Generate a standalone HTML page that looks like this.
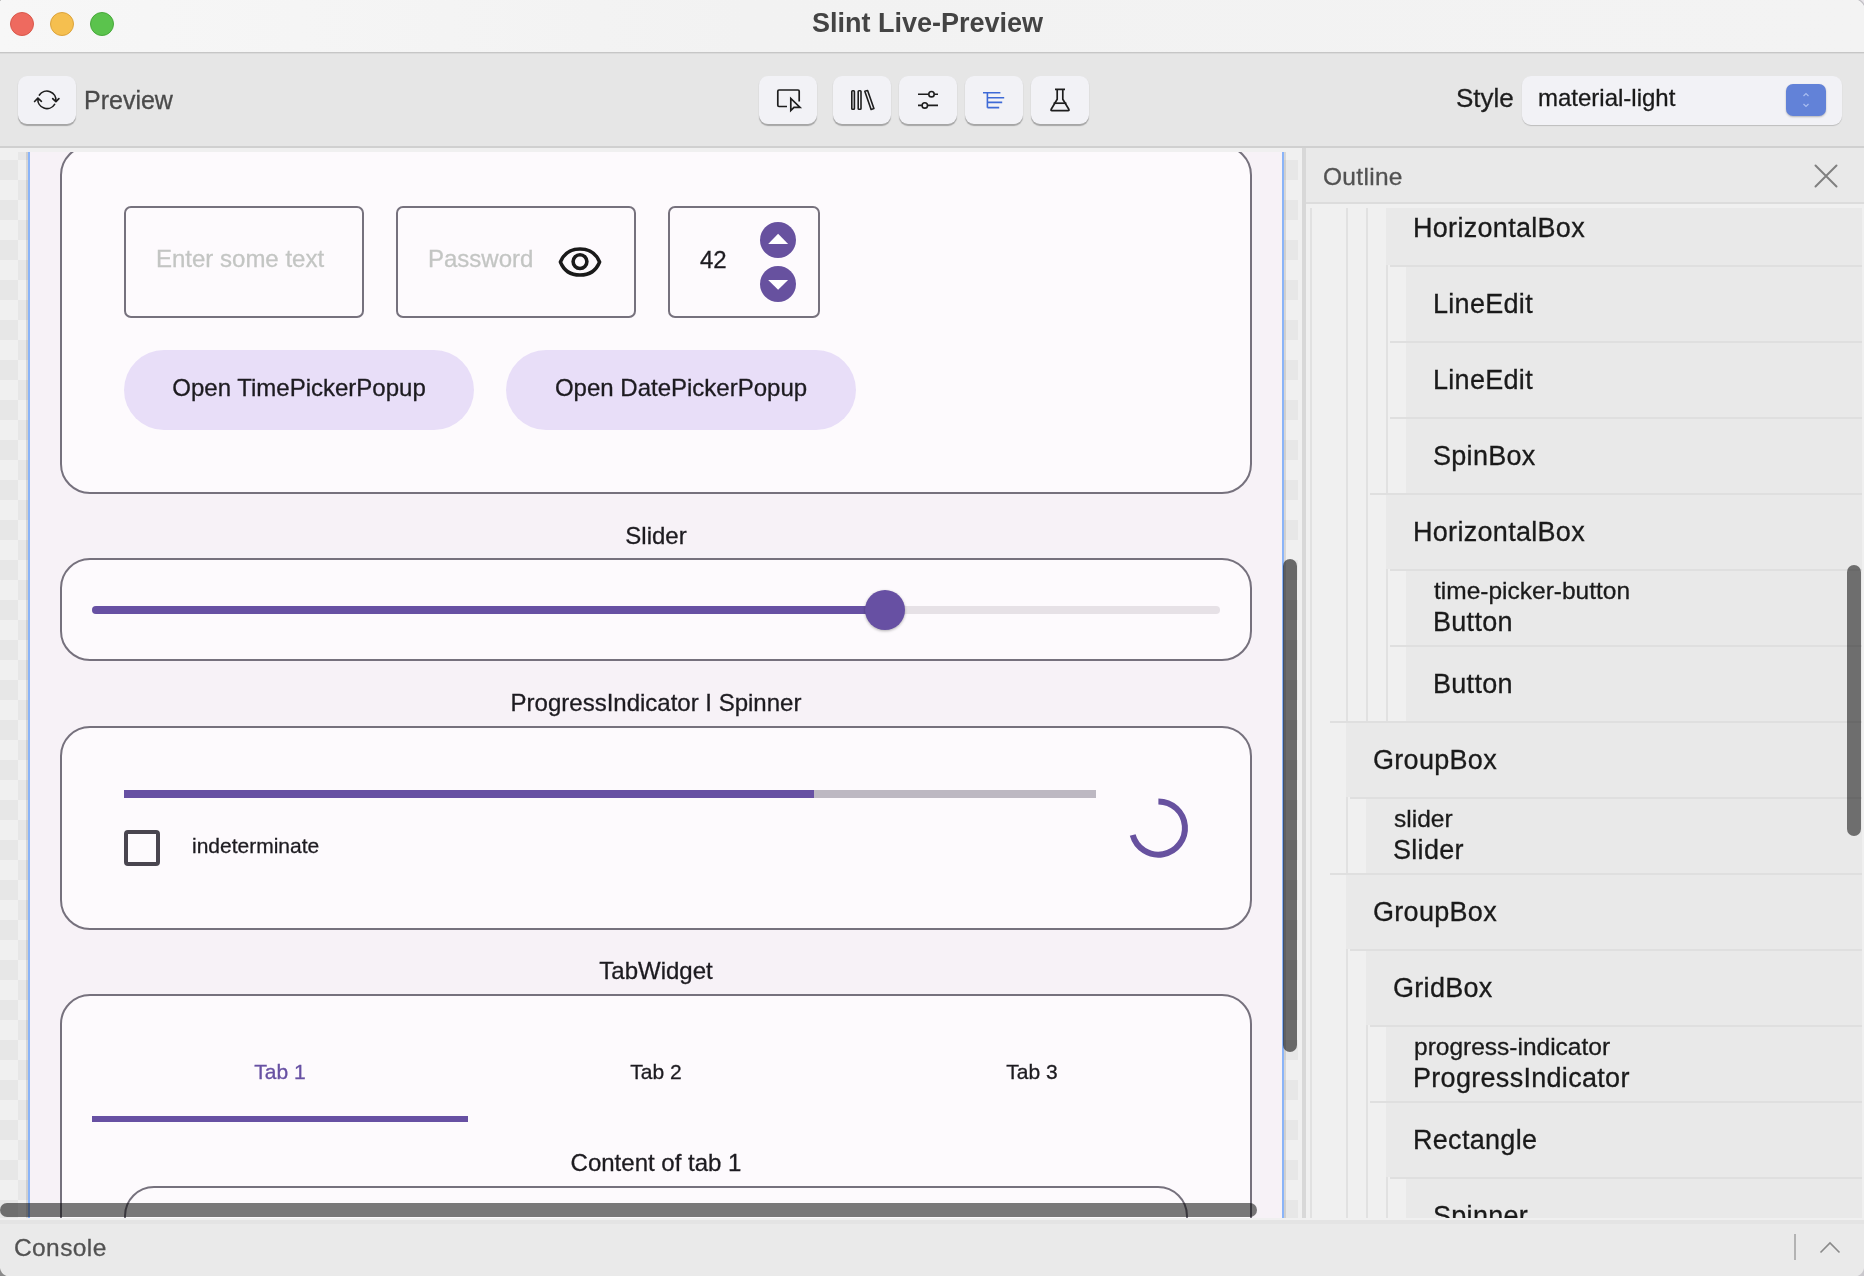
<!DOCTYPE html>
<html><head><meta charset="utf-8">
<style>
*{box-sizing:border-box;margin:0;padding:0}
html,body{width:1864px;height:1276px;overflow:hidden;background:#e9e9e9;font-family:"Liberation Sans",sans-serif}
.a{position:absolute}
.t{position:absolute;white-space:nowrap;line-height:1;will-change:transform;-webkit-text-stroke-width:0.3px}
#titlebar{left:0;top:0;width:1864px;height:53px;background:linear-gradient(90deg,#f7f7f7,#f2f2f2 40%,#f3f3f3);border-bottom:1px solid #c6c6c6}
.light{width:24px;height:24px;border-radius:50%;top:12px}
#toolbar{left:0;top:53px;width:1864px;height:95px;background:#e6e6e6;border-bottom:2px solid #d0d0d0}
.tbtn{background:#f2f2f6;border-radius:9px;box-shadow:0 1.2px 1px rgba(0,0,0,.28);height:48px;top:76px}
#preview{left:0;top:148px;width:1302px;height:1070px;overflow:hidden;
 background-color:#f0f0f0;
 background-image:conic-gradient(#e7e7e7 0 25%,#f0f0f0 0 50%,#e7e7e7 0 75%,#f0f0f0 0);
 background-size:40px 40px;background-position:18px 12px}
#content{left:30px;top:4px;width:1252px;height:1066px;background:#f7f2f7;overflow:hidden}
.box{position:absolute;border:2px solid #76717d;border-radius:30px;background:#fdfafd}
.field{position:absolute;border:2px solid #76717d;border-radius:7px}
.ph{color:#c3c5c3;font-size:24px}
.btn{position:absolute;will-change:transform;-webkit-text-stroke-width:0.3px;background:#e8def8;border-radius:40px;height:80px;width:350px;color:#1d1b20;font-size:24px;text-align:center;line-height:24px;padding-top:26.2px}
.lbl{color:#1d1b20;font-size:24px}
#outline{left:1306px;top:148px;width:558px;height:1070px;background:#f0f0f0;overflow:hidden}
.row{position:absolute;left:0;width:556px;height:76px}
.row .sep{position:absolute;top:0;height:2px;right:0;background:#dfdfdf}
.row .bg{position:absolute;top:2px;bottom:0;right:0;background:#e9e9e9}
.row .nm{position:absolute;will-change:transform;-webkit-text-stroke-width:0.3px;font-size:27px;letter-spacing:0.3px;margin-left:-2.2px;color:#1a1a1a;white-space:nowrap;line-height:1}
.row .id{position:absolute;will-change:transform;-webkit-text-stroke-width:0.3px;font-size:24.5px;margin-left:-1px;color:#1a1a1a;white-space:nowrap;line-height:1}
.guide{position:absolute;width:2px;background:#e1e1e1;top:0;height:1071px}
#console{left:0;top:1218px;width:1864px;height:58px;background:#eaeaea}
</style></head><body>

<!-- title bar -->
<div id="titlebar" class="a">
  <div class="a light" style="left:10px;background:#ee6a5f;border:1px solid #d9584b"></div>
  <div class="a light" style="left:50px;background:#f5bf4f;border:1px solid #dca33b"></div>
  <div class="a light" style="left:90px;background:#5bc34d;border:1px solid #48a93b"></div>
  <div class="t" style="left:811.8px;top:10.3px;font-size:27px;font-weight:bold;color:#444;-webkit-text-stroke-width:0">Slint Live-Preview</div>
</div>

<!-- toolbar -->
<div id="toolbar" class="a"><div class="a" style="left:0;top:0;width:1864px;height:1px;background:#dadada"></div></div>
<div class="a tbtn" style="left:18px;width:58px">
  <svg class="a" style="left:15px;top:10px" width="28" height="28" viewBox="0 0 28 28" fill="none" stroke="#1e1e1e" stroke-width="1.7" stroke-linecap="round" stroke-linejoin="round">
    <path d="M6.4 9 A9.1 9.1 0 0 1 22.9 15.2"/><path d="M21.6 18.4 A9.1 9.1 0 0 1 4.9 12.6"/>
    <path d="M1.6 15.5 L4.9 12.2 L8.4 15.3"/><path d="M19.7 12.6 L22.9 15.7 L25.9 12.6"/>
  </svg>
</div>
<div class="t" style="left:83.8px;top:87.7px;font-size:25px;color:#4a4a4a">Preview</div>

<div class="a tbtn" style="left:759px;width:58px">
  <svg class="a" style="left:0;top:0" width="58" height="48" viewBox="0 0 58 48" fill="none" stroke="#1e1e1e" stroke-width="1.7">
    <path d="M28 30.5 H20 Q18.8 30.5 18.8 29.3 V15.2 Q18.8 14 20 14 H39 Q40.2 14 40.2 15.2 V25.5"/>
    <path d="M31.8 22.5 L31.8 34.5 L35 31.3 L41 31.3 Z" stroke-linejoin="miter"/>
  </svg>
</div>
<div class="a tbtn" style="left:833px;width:58px">
  <svg class="a" style="left:0;top:0" width="58" height="48" viewBox="0 0 58 48" fill="none" stroke="#1e1e1e" stroke-width="1.6">
    <rect x="18.8" y="14.8" width="2.6" height="18.4" rx="0.8"/><rect x="25.2" y="14.8" width="2.8" height="18.4" rx="0.8"/>
    <path d="M31.8 15.3 L34.6 14.5 L40.9 32.6 L38.1 33.5 Z" stroke-linejoin="round"/>
  </svg>
</div>
<div class="a tbtn" style="left:899px;width:58px">
  <svg class="a" style="left:0;top:0" width="58" height="48" viewBox="0 0 58 48" fill="none" stroke="#1e1e1e" stroke-width="1.6">
    <path d="M19 18.2 H29.6 M35.4 18.2 H39"/><circle cx="32.5" cy="18.2" r="2.7"/>
    <path d="M19 29.4 H22.9 M28.7 29.4 H39"/><circle cx="25.8" cy="29.4" r="2.7"/>
  </svg>
</div>
<div class="a tbtn" style="left:965px;width:58px">
  <svg class="a" style="left:0;top:0" width="58" height="48" viewBox="0 0 58 48" fill="none" stroke="#3e6ad6" stroke-width="1.6">
    <path d="M18 16.7 H35.4 M22.4 16.7 V31.8 M22.4 21.8 H39.2 M22.4 26.4 H37.2 M22.4 31.6 H34.2"/>
  </svg>
</div>
<div class="a tbtn" style="left:1031px;width:58px">
  <svg class="a" style="left:0;top:0" width="58" height="48" viewBox="0 0 58 48" fill="none" stroke="#1e1e1e" stroke-width="1.7" stroke-linejoin="round">
    <path d="M24 13.3 H34 M26.2 13.3 V23.2 L20.2 33.3 Q19.5 34.6 21 34.6 H37 Q38.5 34.6 37.8 33.3 L31.8 23.2 V13.3"/>
    <path d="M22.6 27.2 H35.4"/>
  </svg>
</div>

<div class="t" style="left:1456px;top:85px;font-size:26px;color:#1e1e1e">Style</div>
<div class="a tbtn" style="left:1522px;width:320px;height:49px;border-radius:9px;box-shadow:0 1px 1px rgba(0,0,0,.18)"></div>
<div class="t" style="left:1538px;top:86.2px;font-size:24px;color:#1a1a1a">material-light</div>
<div class="a" style="left:1786px;top:84px;width:40px;height:32px;border-radius:7px;background:#6282d8;box-shadow:0 1px 2px rgba(0,0,0,.25)">
  <svg class="a" style="left:0;top:0" width="40" height="32" viewBox="0 0 40 32" fill="none" stroke="#a9bdf0" stroke-width="1.2">
    <path d="M17.5 12 L20 9.5 L22.5 12"/><path d="M17.5 20 L20 22.5 L22.5 20"/>
  </svg>
</div>

<!-- preview area -->
<div id="preview" class="a">
  <div class="a" style="left:0;top:0;width:1302px;height:4px;background:#f0f0f0"></div>
  <div class="a" style="left:26px;top:4px;width:2px;height:1067px;background:rgba(0,0,0,.1)"></div>
  <div class="a" style="left:28px;top:4px;width:2px;height:1067px;background:#8ab4f8"></div>
  <div class="a" style="left:1282px;top:4px;width:2px;height:1067px;background:#8ab4f8"></div>
  <div class="a" style="left:1284px;top:4px;width:2px;height:1067px;background:rgba(0,0,0,.1)"></div>
  <div id="content" class="a">
    <!-- coordinates inside content: x-30, y-152 -->
    <div class="box" style="left:30px;top:-7px;width:1192px;height:349px"></div>
    <div class="field" style="left:94px;top:54px;width:240px;height:112px"></div>
    <div class="t ph" style="left:125.7px;top:95.4px">Enter some text</div>
    <div class="field" style="left:366px;top:54px;width:240px;height:112px"></div>
    <div class="t ph" style="left:397.6px;top:95.4px">Password</div>
    <svg class="a" style="left:527px;top:92px" width="46" height="36" viewBox="0 0 46 36" fill="none" stroke="#1a1a1a" stroke-width="3.2" stroke-linejoin="round">
      <path d="M3.4 18 C6.8 9.6 13.5 4.9 23 4.9 C32.5 4.9 39.2 9.6 42.6 18 C39.2 26.4 32.5 31.1 23 31.1 C13.5 31.1 6.8 26.4 3.4 18 Z" stroke-width="3.5"/><circle cx="23" cy="17.6" r="6.9" stroke-width="3.6"/>
    </svg>
    <div class="field" style="left:638px;top:54px;width:152px;height:112px"></div>
    <div class="t" style="left:670px;top:95.5px;font-size:24px;color:#1d1b20">42</div>
    <svg class="a" style="left:728px;top:70px" width="40" height="84" viewBox="0 0 40 84">
      <circle cx="20" cy="18" r="18" fill="#67519f"/><path d="M10.2 21.9 L20.1 11.8 L30.1 21.9 Z" fill="#fff"/>
      <circle cx="20" cy="62" r="18" fill="#67519f"/><path d="M10.2 57.9 L20.1 67.8 L30.1 57.9 Z" fill="#fff"/>
    </svg>
    <div class="btn" style="left:94px;top:198px">Open TimePickerPopup</div>
    <div class="btn" style="left:476px;top:198px">Open DatePickerPopup</div>

    <div class="t lbl" style="left:0;width:1252px;text-align:center;top:372px">Slider</div>
    <div class="box" style="left:30px;top:406px;width:1192px;height:103px"></div>
    <div class="a" style="left:62px;top:454px;width:1128px;height:8px;border-radius:4px;background:#e6e1e6"></div>
    <div class="a" style="left:62px;top:454px;width:794px;height:8px;border-radius:4px 0 0 4px;background:#6750a3"></div>
    <div class="a" style="left:834.5px;top:438px;width:40px;height:40px;border-radius:50%;background:#6750a3;box-shadow:0 1px 3px rgba(0,0,0,.3)"></div>

    <div class="t lbl" style="left:0;width:1252px;text-align:center;top:538.9px">ProgressIndicator I Spinner</div>
    <div class="box" style="left:30px;top:574px;width:1192px;height:204px"></div>
    <div class="a" style="left:94px;top:638px;width:972px;height:8px;background:#bdb8c2"></div>
    <div class="a" style="left:94px;top:638px;width:690px;height:8px;background:#6750a3"></div>
    <div class="a" style="left:94px;top:678px;width:36px;height:36px;border:4px solid #49454f;border-radius:4px"></div>
    <div class="t" style="left:162px;top:683.2px;font-size:21px;color:#1d1b20">indeterminate</div>
    <svg class="a" style="left:1088px;top:636px" width="80" height="80" viewBox="0 0 80 80" fill="none" stroke="#67519f" stroke-width="6">
      <path d="M40.4 13.4 A26.6 26.6 0 1 1 14.7 47"/>
    </svg>

    <div class="t lbl" style="left:0;width:1252px;text-align:center;top:807.4px">TabWidget</div>
    <div class="box" style="left:30px;top:842px;width:1192px;height:400px"></div>
    <div class="t" style="left:62px;width:376px;text-align:center;top:909.2px;font-size:21px;color:#6750a3">Tab 1</div>
    <div class="t" style="left:438px;width:376px;text-align:center;top:909.2px;font-size:21px;color:#1d1b20">Tab 2</div>
    <div class="t" style="left:814px;width:376px;text-align:center;top:909.2px;font-size:21px;color:#1d1b20">Tab 3</div>
    <div class="a" style="left:62px;top:964px;width:376px;height:6px;background:#6750a3"></div>
    <div class="t lbl" style="left:0;width:1252px;text-align:center;top:999px">Content of tab 1</div>
    <div class="box" style="left:94px;top:1034px;width:1064px;height:300px"></div>
  </div>
  <div class="a" style="left:0;top:1055px;width:1257px;height:14px;border-radius:7px;background:rgba(0,0,0,.52)"></div>
  <div class="a" style="left:1283px;top:411px;width:14px;height:493px;border-radius:7px;background:rgba(0,0,0,.55)"></div>
  <div class="a" style="left:1298px;top:0;width:4px;height:1071px;background:#f0f0f0"></div>
</div>
<div class="a" style="left:1302px;top:148px;width:4px;height:1070px;background:#d8d8d8"></div>

<!-- outline panel -->
<div id="outline" class="a">
  <div class="a" style="left:0;top:0;width:558px;height:54px;background:#e9e9e9"></div>
  <div class="t" style="left:17px;top:17px;font-size:24.5px;letter-spacing:0.3px;color:#525252">Outline</div>
  <svg class="a" style="left:507px;top:15px" width="26" height="26" viewBox="0 0 26 26" stroke="#808080" stroke-width="2" stroke-linecap="round">
    <path d="M2.5 2.5 L23.5 23.5 M23.5 2.5 L2.5 23.5"/>
  </svg>
  <div class="a" style="left:0;top:54px;width:558px;height:2px;background:#dcdcdc"></div>
  <div id="tree" class="a" style="left:0;top:60px;width:558px;height:1011px;overflow:hidden">
    <div class="guide" style="left:4px"></div>
    <div class="guide" style="left:40px"></div>
    <div class="guide" style="left:60px"></div>
    <div class="guide" style="left:80px"></div>
<div class="row" style="top:-19px"><div class="sep" style="left:64px"></div><div class="bg" style="left:80px"></div><div class="nm" style="left:109px;top:26px">HorizontalBox</div></div>
<div class="row" style="top:57px"><div class="sep" style="left:84px"></div><div class="bg" style="left:100px"></div><div class="nm" style="left:129px;top:26px">LineEdit</div></div>
<div class="row" style="top:133px"><div class="sep" style="left:84px"></div><div class="bg" style="left:100px"></div><div class="nm" style="left:129px;top:26px">LineEdit</div></div>
<div class="row" style="top:209px"><div class="sep" style="left:84px"></div><div class="bg" style="left:100px"></div><div class="nm" style="left:129px;top:26px">SpinBox</div></div>
<div class="row" style="top:285px"><div class="sep" style="left:64px"></div><div class="bg" style="left:80px"></div><div class="nm" style="left:109px;top:26px">HorizontalBox</div></div>
<div class="row" style="top:361px"><div class="sep" style="left:84px"></div><div class="bg" style="left:100px"></div><div class="id" style="left:129px;top:10px">time-picker-button</div><div class="nm" style="left:129px;top:40.4px">Button</div></div>
<div class="row" style="top:437px"><div class="sep" style="left:84px"></div><div class="bg" style="left:100px"></div><div class="nm" style="left:129px;top:26px">Button</div></div>
<div class="row" style="top:513px"><div class="sep" style="left:24px"></div><div class="bg" style="left:40px"></div><div class="nm" style="left:69px;top:26px">GroupBox</div></div>
<div class="row" style="top:589px"><div class="sep" style="left:44px"></div><div class="bg" style="left:60px"></div><div class="id" style="left:89px;top:10px">slider</div><div class="nm" style="left:89px;top:40.4px">Slider</div></div>
<div class="row" style="top:665px"><div class="sep" style="left:24px"></div><div class="bg" style="left:40px"></div><div class="nm" style="left:69px;top:26px">GroupBox</div></div>
<div class="row" style="top:741px"><div class="sep" style="left:44px"></div><div class="bg" style="left:60px"></div><div class="nm" style="left:89px;top:26px">GridBox</div></div>
<div class="row" style="top:817px"><div class="sep" style="left:64px"></div><div class="bg" style="left:80px"></div><div class="id" style="left:109px;top:10px">progress-indicator</div><div class="nm" style="left:109px;top:40.4px">ProgressIndicator</div></div>
<div class="row" style="top:893px"><div class="sep" style="left:64px"></div><div class="bg" style="left:80px"></div><div class="nm" style="left:109px;top:26px">Rectangle</div></div>
<div class="row" style="top:969px"><div class="sep" style="left:84px"></div><div class="bg" style="left:100px"></div><div class="nm" style="left:129px;top:26px">Spinner</div></div>
  </div>
</div>

<div class="a" style="left:1847px;top:565px;width:14px;height:271px;border-radius:7px;background:rgba(0,0,0,.53)"></div>
<!-- console -->
<div id="console" class="a">
  <div class="a" style="left:0;top:0;width:1864px;height:2px;background:#f0f0f0"></div><div class="a" style="left:0;top:2px;width:1864px;height:4px;background:#e4e4e4"></div>
  <div class="t" style="left:14px;top:17.7px;font-size:24.5px;letter-spacing:0.4px;color:#525252">Console</div>
  <div class="a" style="left:1794px;top:16px;width:2px;height:26px;background:#b3b3b3"></div>
  <svg class="a" style="left:1818px;top:21.5px" width="24" height="16" viewBox="0 0 24 16" fill="none" stroke="#8a8a8a" stroke-width="1.6">
    <path d="M2.5 12.5 L12 3 L21.5 12.5"/>
  </svg>
</div>
<div class="a" style="left:1854px;top:1266px;width:10px;height:10px;background:radial-gradient(circle at 0 0.5px,transparent 9.6px,#c9c7cc 10.6px)"></div>
<div class="a" style="left:0;top:1266px;width:10px;height:10px;background:radial-gradient(circle at 10px 0.5px,transparent 9.6px,#8a8a8a 10.6px)"></div>
<div class="a" style="left:1854px;top:0;width:10px;height:10px;background:radial-gradient(circle at -2px 12px,transparent 13px,#b9b7bc 13.9px,#e8e5ea 15.2px)"></div>
<div class="a" style="left:0;top:0;width:10px;height:10px;background:radial-gradient(circle at 10.5px 10.5px,transparent 13.6px,#9a9a9a 14.6px)"></div>
</body></html>
